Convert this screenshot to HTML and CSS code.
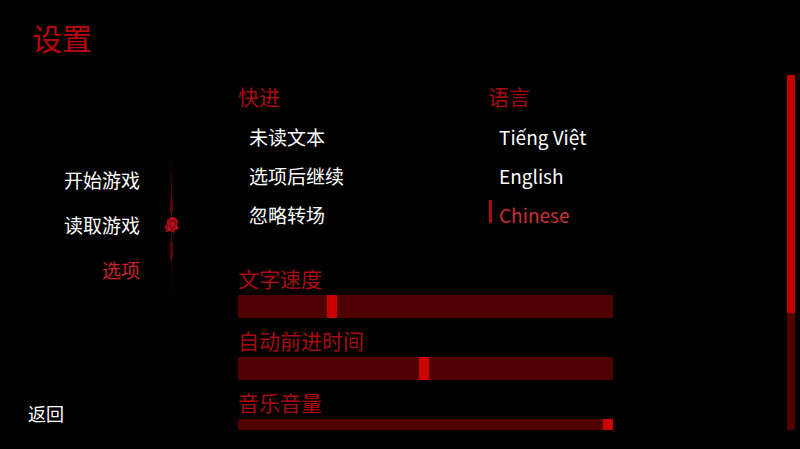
FILE: index.html
```html
<!DOCTYPE html>
<html lang="zh-CN">

<head>
    <meta charset="UTF-8" />
    <meta name="viewport" content="width=device-width, initial-scale=1.0" />
    <title>设置</title>

    <!-- css -->

    <link rel="stylesheet" href="styles.css">
</head>

<body>
    <h1 class="title">设置</h1>

    <aside class="sidebar">
        <div class="menu">
            <nav class="links">
                <a href="#start">开始游戏</a>
                <a href="#load">读取游戏</a>
                <a href="#options" class="active">选项</a>
            </nav>

            <!-- rose on a stem -->
            <svg class="rose" viewBox="0 0 20 136" width="20" height="136" aria-hidden="true">
                <g fill="none" stroke="#5c0810" stroke-width="1">
                    <path d="M9 0 L9 14 L8 26" stroke="#1c0205" />
                    <path d="M9.500 16 V40" stroke="#38040a" />
                    <path d="M9.500 32 V62" />
                    <path d="M9.500 39 Q6.500 49 9.500 59 Q12.500 49 9.500 39" />
                    <path d="M9.500 76 V106" />
                    <path d="M9.500 83 Q6.500 92 9.500 104 Q12.500 92 9.500 83" />
                    <path d="M9.500 104 L10 120" stroke="#38040a" />
                    <path d="M10 118 L9 125 L12 136" stroke="#1c0205" />
                </g>
                <path fill="#a80d16" d="M7 62 L9 60 L12 60 L15 62 L16 65 L15 68 L17 72 L13 73 L12 76 L8 74 L4 75 L4 72 L2 70 L5 67 L5 63 Z" />
                <g fill="none" stroke="#78060e" stroke-width="1">
                    <path d="M7 65 Q10 62 13 64 Q15 68 11 71 Q8 71 7 68" />
                    <path d="M5 68 Q6 73 11 73 M4 71 L7 72" />
                </g>
                <path d="M8 62 L12 61 M10 66 L12 68 M6 70 L8 73 M14 69 L15 71" fill="none" stroke="#d4202a" stroke-width="1" />
            </svg>
        </div>

        <a href="#back" class="back">返回</a>
    </aside>

    <main class="panel">
        <div class="settings">
            <fieldset class="group">
                <legend>快进</legend>
                <label class="option"><input type="checkbox" name="unseen">未读文本</label>
                <label class="option"><input type="checkbox" name="choices">选项后继续</label>
                <label class="option"><input type="checkbox" name="transitions">忽略转场</label>
            </fieldset>

            <fieldset class="group">
                <legend>语言</legend>
                <label class="option"><input type="radio" name="language" value="vi">Tiếng Việt</label>
                <label class="option"><input type="radio" name="language" value="en">English</label>
                <label class="option"><input type="radio" name="language" value="zh" checked>Chinese</label>
            </fieldset>

            <div class="sliders">
                <label for="textSpeed">文字速度</label>
                <input type="range" id="textSpeed" min="0" max="1000" value="244">

                <label for="autoTime">自动前进时间</label>
                <input type="range" id="autoTime" min="0" max="1000" value="497">

                <label for="musicVolume">音乐音量</label>
                <input type="range" id="musicVolume" min="0" max="1000" value="1000">
            </div>
        </div>

        <div class="scrollbar">
            <div class="scroll-thumb"></div>
        </div>
    </main>
</body>

</html>
```

FILE: styles.css
```css
* {
    box-sizing: border-box;
}

body {
    margin: 0;
    height: 100vh;
    padding-bottom: 19px;
    display: grid;
    grid-template-columns: 238px 1fr;
    grid-template-rows: 75px 1fr;
    background-color: #000;
    color: #fff;
    font-family: "Noto Sans CJK SC", sans-serif;
    font-size: 19px;
    overflow: hidden;
}

a {
    color: #fff;
    text-decoration: none;
}

.title {
    grid-column: 1 / 3;
    margin: 0;
    padding: 15px 0 0 32px;
    font-size: 30px;
    line-height: 44px;
    font-weight: normal;
    color: #b8060c;
}

/* left menu */

.sidebar {
    display: flex;
    flex-direction: column;
    justify-content: space-between;
    min-height: 0;
}

.menu {
    display: flex;
    gap: 22px;
    padding-top: 82px;
}

.links {
    width: 140px;
    display: flex;
    flex-direction: column;
    text-align: right;
    line-height: 45px;
}

.links a.active {
    color: #cc2229;
}

.back {
    padding: 0 0 4px 28px;
    font-size: 18px;
    line-height: 26px;
}

a:hover,
.option:hover {
    color: #cc2229;
}

/* settings */

.panel {
    display: flex;
    min-height: 0;
    padding-right: 5px;
}

.settings {
    flex: 1;
    display: grid;
    grid-template-columns: 1fr 1fr;
    align-content: start;
    row-gap: 31px;
    padding: 3px 49px 0 0;
    overflow: hidden;
}

.group {
    min-width: 0;
    margin: 0;
    padding: 0;
    border: 0;
}

.group legend,
.sliders label {
    padding: 0;
    font-size: 21px;
    color: #a80a10;
}

.group legend {
    padding-bottom: 2px;
    line-height: 37px;
}

.option {
    display: flex;
    gap: 7px;
    line-height: 39px;
    cursor: pointer;
}

.option input {
    appearance: none;
    width: 3px;
    height: 23px;
    margin: 5px 0 0 1px;
}

.option input:checked {
    background-color: #a80a10;
}

.option:has(input:checked) {
    color: #cc2e35;
}

.sliders {
    grid-column: 1 / 3;
    width: 75%;
}

.sliders label {
    display: block;
    padding-bottom: 4px;
    line-height: 26px;
}

.sliders input {
    appearance: none;
    display: block;
    width: 100%;
    height: 23px;
    margin: 0 0 9px;
    background-color: #500000;
    cursor: pointer;
}

.sliders input::-webkit-slider-thumb {
    appearance: none;
    width: 10px;
    height: 23px;
    background-color: #cc0000;
}

.scrollbar {
    width: 8px;
    background-color: #500000;
}

.scroll-thumb {
    height: 67%;
    background-color: #c40000;
}
```
